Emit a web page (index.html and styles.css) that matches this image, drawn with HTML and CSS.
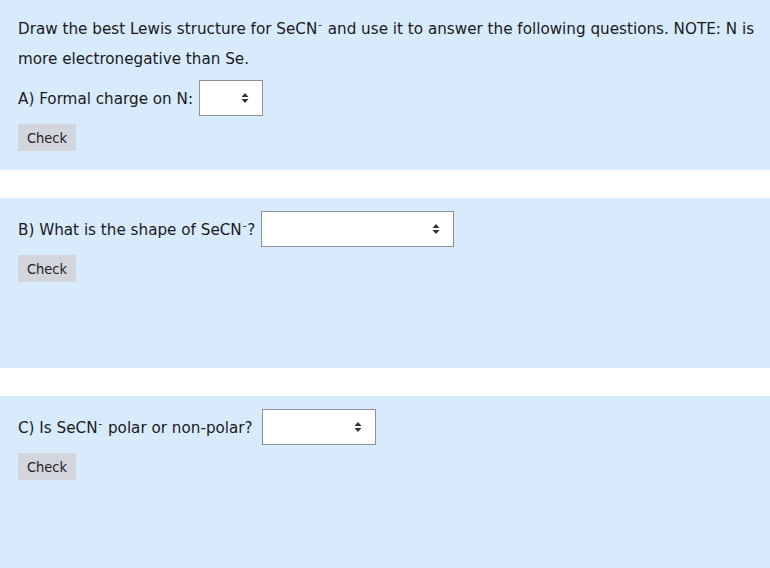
FILE: index.html
```html
<!DOCTYPE html>
<html>
<head>
<meta charset="utf-8">
<link rel="stylesheet" href="styles.css">
</head>
<body>
<div class="page">
  <section class="panel">
    <p class="intro">Draw the best Lewis structure for SeCN<sup class="chg">-</sup> and use it to answer the following questions. NOTE: N is more electronegative than Se.</p>
    <div class="qrow">
      <span class="label">A) Formal charge on N:</span>
      <div class="select sel-a"><svg class="arrows" width="8" height="12" viewBox="0 0 8 12"><path d="M4 1 L7.5 5 L0.5 5 Z M0.5 7 L7.5 7 L4 11 Z" fill="#333"/></svg></div>
    </div>
    <button class="check">Check</button>
  </section>
  <section class="panel">
    <div class="qrow first">
      <span class="label">B) What is the shape of SeCN<sup class="chg">-</sup>?</span>
      <div class="select sel-b"><svg class="arrows" width="8" height="12" viewBox="0 0 8 12"><path d="M4 1 L7.5 5 L0.5 5 Z M0.5 7 L7.5 7 L4 11 Z" fill="#333"/></svg></div>
    </div>
    <button class="check">Check</button>
  </section>
  <section class="panel last">
    <div class="qrow first">
      <span class="label">C) Is SeCN<sup class="chg">-</sup> polar or non-polar?</span>
      <div class="select sel-c"><svg class="arrows" width="8" height="12" viewBox="0 0 8 12"><path d="M4 1 L7.5 5 L0.5 5 Z M0.5 7 L7.5 7 L4 11 Z" fill="#333"/></svg></div>
    </div>
    <button class="check">Check</button>
  </section>
</div>
</body>
</html>
```
FILE: styles.css
```css
html, body {
  margin: 0;
  padding: 0;
  background: #ffffff;
}
body {
  font-family: "DejaVu Sans", Verdana, sans-serif;
  font-size: 15.2px;
  color: #1a1a1a;
}
.page {
  display: flex;
  flex-direction: column;
  gap: 28px;
  height: 568px;
}
.panel {
  background: #d7ebfd;
  height: 170px;
  box-sizing: border-box;
  padding: 13px 6px 0 18px;
  display: flex;
  flex-direction: column;
  align-items: flex-start;
}
.panel.last {
  flex: 1;
}
.intro {
  margin: 1px 0 0 0;
  line-height: 30px;
}
.chg {
  font-size: 10px;
  vertical-align: 6px;
  line-height: 0;
  margin: 0 1px;
}
.qrow {
  display: flex;
  align-items: center;
  gap: 6px;
  margin-top: 6px;
}
.label {
  padding-top: 1px;
}
.qrow.first {
  margin-top: 0;
}
.select {
  height: 36px;
  box-sizing: border-box;
  border: 1px solid #8e9196;
  background: #ffffff;
  display: flex;
  align-items: center;
  justify-content: flex-end;
  padding-right: 13px;
}
.sel-a { width: 64px; }
.sel-b { width: 193px; }
.sel-c { width: 114px; margin-left: 3px; }
.check {
  margin-top: 8px;
  background: #d2d6dc;
  border: none;
  border-radius: 0;
  font-family: "DejaVu Sans Condensed", Tahoma, sans-serif;
  font-size: 14.5px;
  color: #222;
  width: 58px;
  height: 27px;
  padding: 0;
}
```
